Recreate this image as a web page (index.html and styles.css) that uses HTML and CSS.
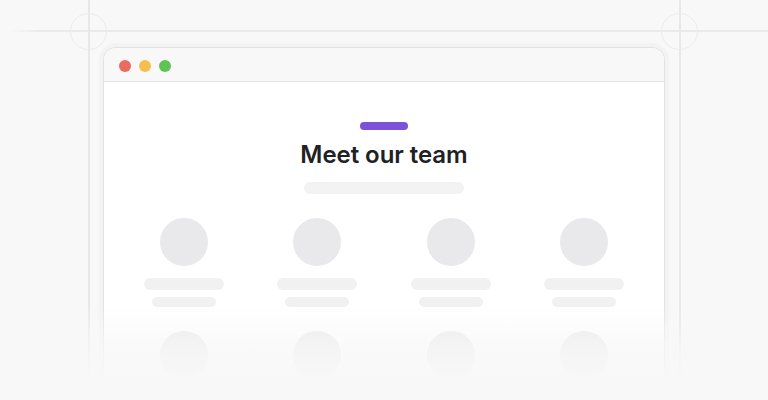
FILE: index.html
```html
<!DOCTYPE html>
<html lang="en">
<head>
<meta charset="utf-8">
<title>Meet our team</title>
<link rel="stylesheet" href="styles.css">
</head>
<body>
<div class="guides" aria-hidden="true">
  <div class="hline"></div>
  <div class="vline vline-left"></div>
  <div class="vline vline-right"></div>
  <div class="ring ring-left"></div>
  <div class="ring ring-right"></div>
</div>
<main class="stage">
  <div class="window">
    <div class="titlebar">
      <span class="dot dot-red"></span>
      <span class="dot dot-yellow"></span>
      <span class="dot dot-green"></span>
    </div>
    <div class="content">
      <div class="accent"></div>
      <h1 class="title">Meet our team</h1>
      <div class="subtitle"></div>
      <div class="team">
        <div class="member"><div class="avatar"></div><div class="name"></div><div class="role"></div></div>
        <div class="member"><div class="avatar"></div><div class="name"></div><div class="role"></div></div>
        <div class="member"><div class="avatar"></div><div class="name"></div><div class="role"></div></div>
        <div class="member"><div class="avatar"></div><div class="name"></div><div class="role"></div></div>
        <div class="member"><div class="avatar"></div><div class="name"></div><div class="role"></div></div>
        <div class="member"><div class="avatar"></div><div class="name"></div><div class="role"></div></div>
        <div class="member"><div class="avatar"></div><div class="name"></div><div class="role"></div></div>
        <div class="member"><div class="avatar"></div><div class="name"></div><div class="role"></div></div>
      </div>
    </div>
  </div>
</main>
<div class="fade" aria-hidden="true"></div>
</body>
</html>
```

FILE: styles.css
```css
* { box-sizing: border-box; }

html, body {
  margin: 0;
  padding: 0;
}

body {
  width: 768px;
  height: 400px;
  overflow: hidden;
  position: relative;
  background: #f8f8f8;
  font-family: Inter, "Noto Sans", sans-serif;
}

.guides {
  position: absolute;
  inset: 0;
  pointer-events: none;
}

.hline {
  position: absolute;
  left: 0;
  right: 0;
  top: 30px;
  height: 2px;
  background: linear-gradient(to right, rgba(232,232,232,0) 10px, #eaeaea 40px, #eaeaea 100%);
}

.vline {
  position: absolute;
  top: 0;
  bottom: 0;
  width: 2px;
  background: #e8e8e8;
}
.vline-left { left: 88px; }
.vline-right { left: 679px; }

.ring {
  position: absolute;
  top: 13px;
  width: 37px;
  height: 37px;
  border: 1px solid #ececec;
  border-radius: 50%;
}
.ring-left { left: 70px; }
.ring-right { left: 661px; }

.stage {
  position: relative;
  height: 400px;
  padding: 47px 0 0 103px;
}

.window {
  width: 562px;
  height: 353px;
  background: #ffffff;
  border: 1.5px solid #e3e3e3;
  border-bottom: none;
  border-radius: 13px 13px 0 0;
  overflow: hidden;
  box-shadow: 0 0 0 4px rgba(240,240,240,0.6);
}

.titlebar {
  height: 34px;
  background: #f8f8f8;
  border-bottom: 1.5px solid #e6e6e6;
  display: flex;
  align-items: center;
  gap: 8px;
  padding: 2px 0 0 15px;
}

.dot {
  width: 12px;
  height: 12px;
  border-radius: 50%;
}
.dot-red { background: #ec6a5f; }
.dot-yellow { background: #f4bf4f; }
.dot-green { background: #5fc454; }

.content {
  display: flex;
  flex-direction: column;
  align-items: center;
  padding: 40px 40px 0;
}

.accent {
  width: 48px;
  height: 8px;
  border-radius: 4px;
  background: #7b52d8;
}

.title {
  margin: 10px 0 0;
  font-size: 24px;
  line-height: 30px;
  font-weight: 600;
  color: #202124;
  letter-spacing: -0.05px;
}

.subtitle {
  margin-top: 12px;
  width: 160px;
  height: 12px;
  border-radius: 6px;
  background: #f3f3f3;
}

.team {
  width: 100%;
  margin-top: 24px;
  display: grid;
  grid-template-columns: repeat(4, 80px);
  justify-content: space-between;
  row-gap: 24px;
}

.member {
  display: flex;
  flex-direction: column;
  align-items: center;
}

.avatar {
  width: 48px;
  height: 48px;
  border-radius: 50%;
  background: #e9e9eb;
}

.name {
  margin-top: 12px;
  width: 80px;
  height: 12px;
  border-radius: 6px;
  background: #f1f1f1;
}

.role {
  margin-top: 7px;
  width: 64px;
  height: 10px;
  border-radius: 5px;
  background: #f1f1f1;
}

.fade {
  position: absolute;
  left: 0;
  right: 0;
  bottom: 0;
  height: 95px;
  background: linear-gradient(to bottom, rgba(248,248,248,0) 0%, rgba(248,248,248,0.75) 45%, #f8f8f8 80%);
  pointer-events: none;
}
```
